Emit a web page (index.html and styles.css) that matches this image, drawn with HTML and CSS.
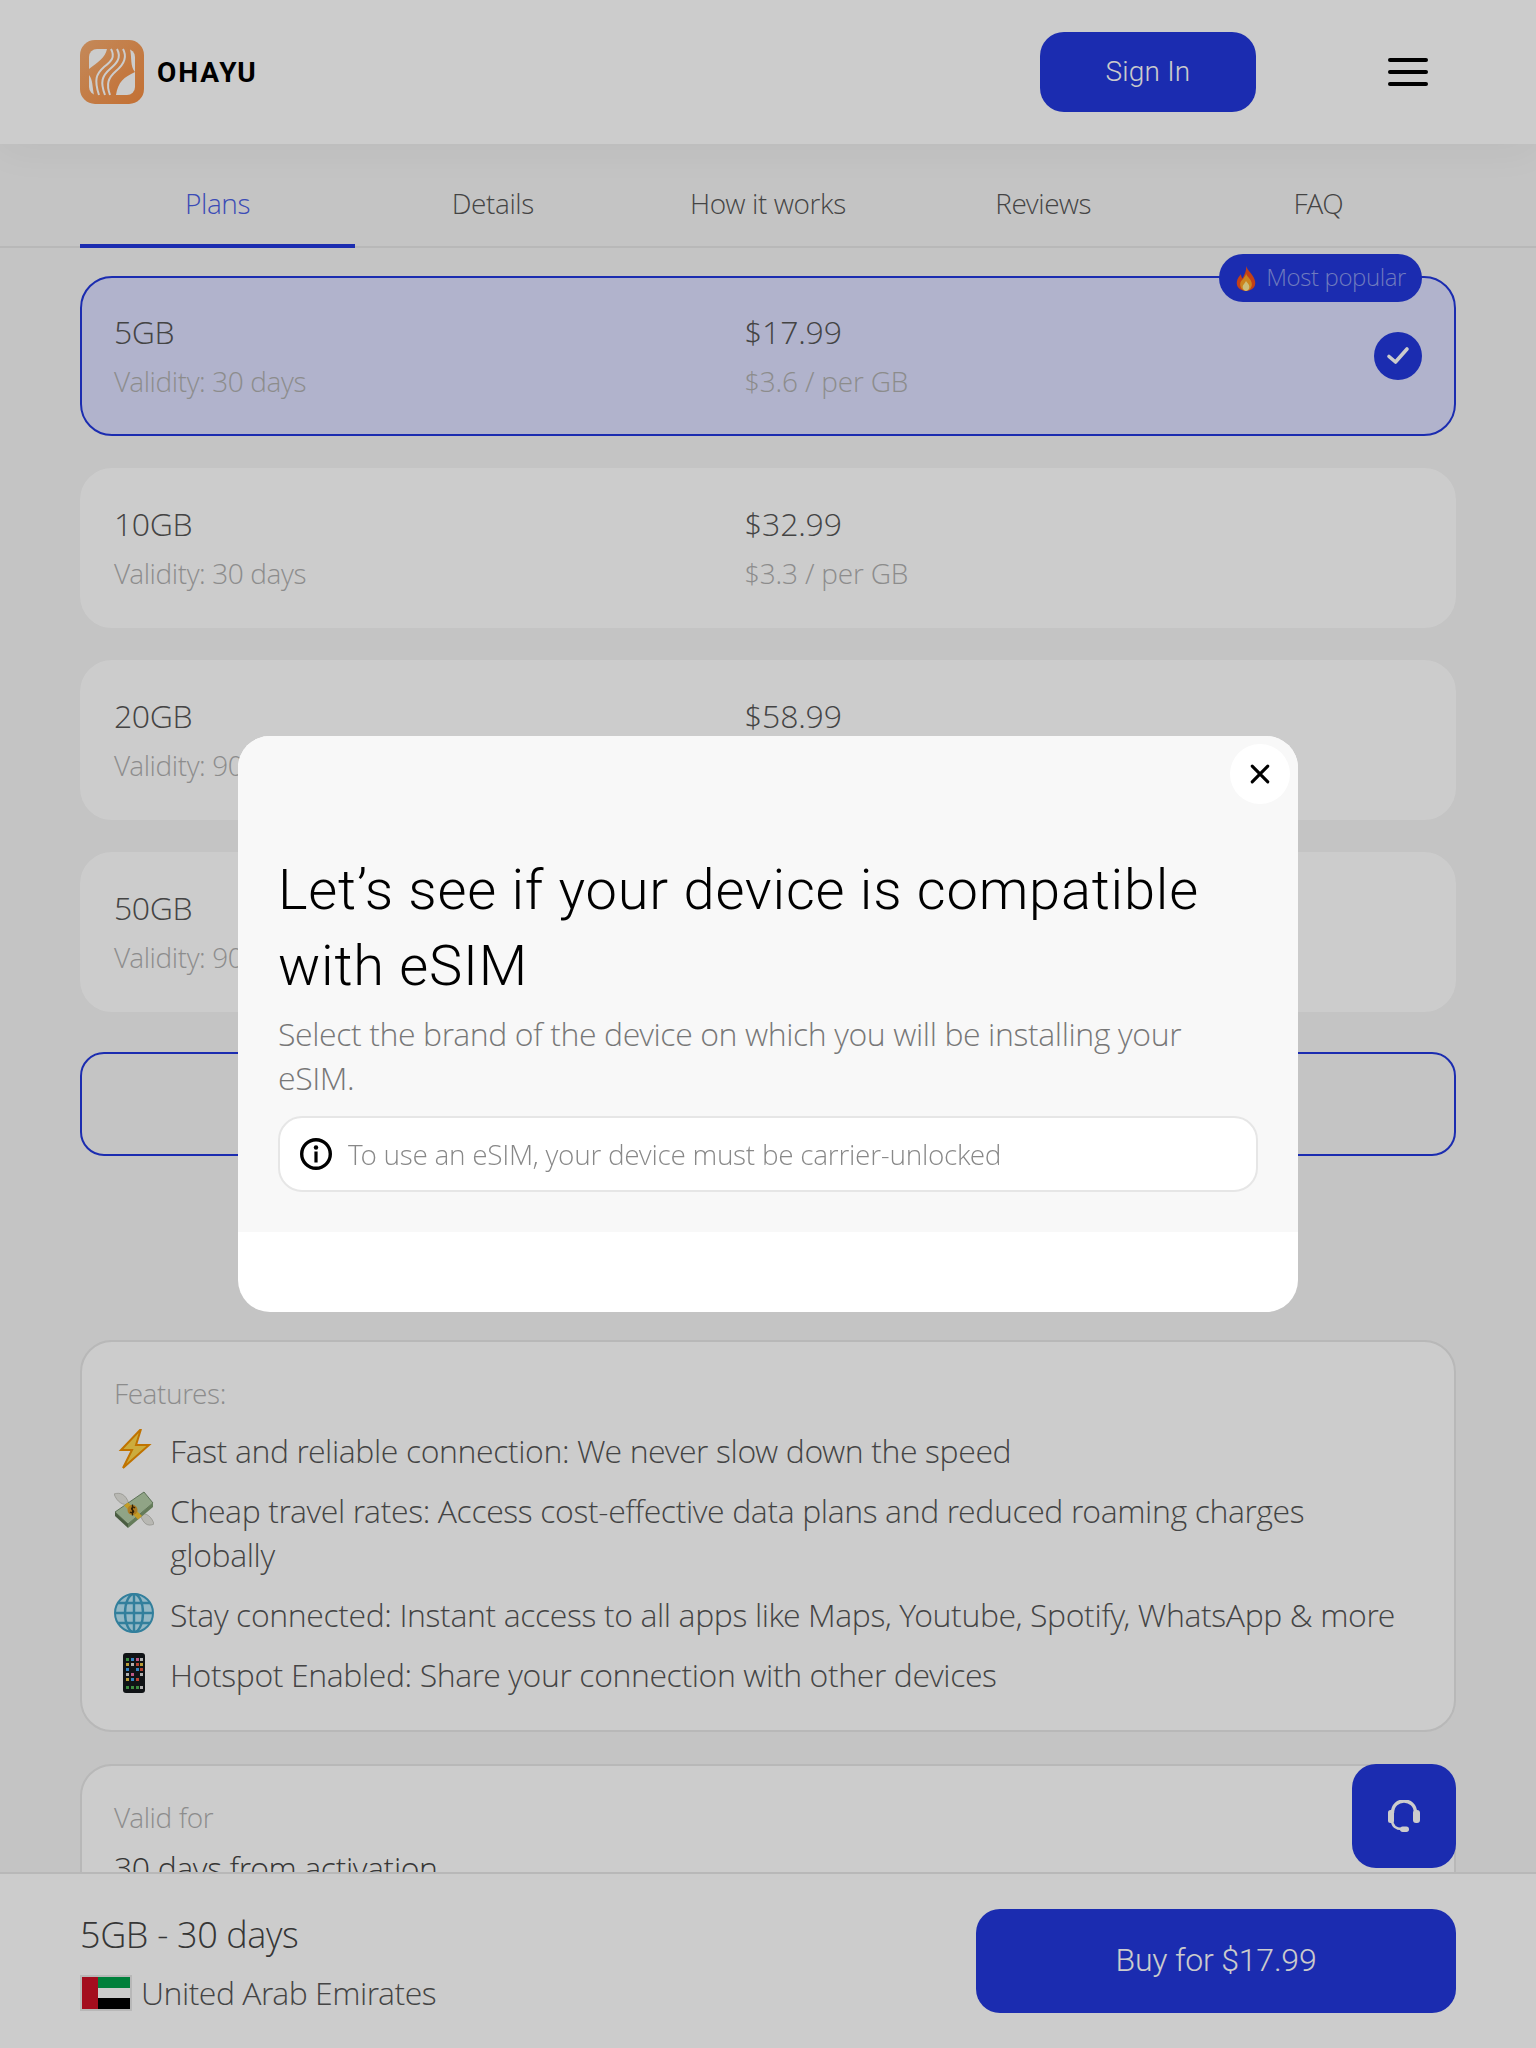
FILE: index.html
```html
<!DOCTYPE html>
<html lang="en">
  <head>
    <meta charset="UTF-8" />
    <meta name="viewport" content="width=device-width, initial-scale=1.0" />
    <title>OHAYU - United Arab Emirates eSIM</title>
    <link rel="stylesheet" href="styles.css">
  </head>
  <body>
    <header class="topbar">
      <div class="brand">
        <svg class="brand-logo" viewBox="0 0 64 64" aria-hidden="true">
          <defs>
            <linearGradient id="logoFill" x1="0" y1="0" x2="1" y2="1">
              <stop offset="0" stop-color="#f5ac70" />
              <stop offset="1" stop-color="#f48c40" />
            </linearGradient>
          </defs>
          <rect width="64" height="64" rx="15" fill="url(#logoFill)" />
          <rect x="9" y="9" width="46" height="46" rx="8" fill="#fff" />
          <path d="M9 29 C18 22 25 18 27 9 L50 9 C52 18 50 26 55 32 C44 37 38 42 36 55 L14 55 C12 46 13 40 9 35 Z" fill="url(#logoFill)" />
          <g fill="none" stroke="#fff" stroke-width="2">
            <path d="M31 9 C36 18 30 22 24 27 C16 34 14 40 19 55" />
            <path d="M37 9 C42 18 36 24 30 29 C22 36 20 42 25 55" />
            <path d="M43 9 C48 18 42 26 36 31 C28 38 26 44 30 55" />
          </g>
        </svg>
        <span class="brand-name">OHAYU</span>
      </div>
      <div class="topbar-actions">
        <button class="btn sign-in" type="button">Sign In</button>
        <div class="burger"><span></span><span></span><span></span></div>
      </div>
    </header>

    <nav class="tabs">
      <a class="tab tab-active">Plans</a>
      <a class="tab">Details</a>
      <a class="tab">How it works</a>
      <a class="tab">Reviews</a>
      <a class="tab">FAQ</a>
    </nav>

    <main class="content">
      <section class="plan plan-selected">
        <div class="plan-col">
          <div class="plan-title">5GB</div>
          <div class="plan-sub">Validity: 30 days</div>
        </div>
        <div class="plan-col plan-price">
          <div class="plan-title">$17.99</div>
          <div class="plan-sub">$3.6 / per GB</div>
        </div>
        <span class="badge">
          <svg class="badge-flame" viewBox="0 0 24 30" aria-hidden="true">
            <path d="M12 0 C14 6 22 11 23 19 C24 26 18 30 12 30 C6 30 0 26 1 19 C1.500 15 4 12 6 10 C6 13 7 14 8 15 C10 10 13 6 12 0 Z" fill="#f4511e" />
            <path d="M12 9 C13 13 19 16 19 22 C19 27 15 30 12 30 C9 30 5 27 5 22 C5 19 7 17 9 15 C10 13 12 12 12 9 Z" fill="#ffa726" />
            <path d="M12 18 C13 20 16 22 16 25 C16 28 14 30 12 30 C10 30 8 28 8 25 C8 22 11 21 12 18 Z" fill="#ffee99" />
          </svg>
          <span class="badge-text">Most popular</span>
        </span>
        <span class="plan-check">
          <svg viewBox="0 0 24 24" aria-hidden="true"><path d="M3 12.500 L9.500 18 L21 5" fill="none" stroke="#fff" stroke-width="3.600" stroke-linecap="round" stroke-linejoin="round" /></svg>
        </span>
      </section>

      <section class="plan">
        <div class="plan-col">
          <div class="plan-title">10GB</div>
          <div class="plan-sub">Validity: 30 days</div>
        </div>
        <div class="plan-col plan-price">
          <div class="plan-title">$32.99</div>
          <div class="plan-sub">$3.3 / per GB</div>
        </div>
      </section>

      <section class="plan">
        <div class="plan-col">
          <div class="plan-title">20GB</div>
          <div class="plan-sub">Validity: 90 days</div>
        </div>
        <div class="plan-col plan-price">
          <div class="plan-title">$58.99</div>
          <div class="plan-sub">$2.95 / per GB</div>
        </div>
      </section>

      <section class="plan">
        <div class="plan-col">
          <div class="plan-title">50GB</div>
          <div class="plan-sub">Validity: 90 days</div>
        </div>
      </section>

      <div class="outline-box"></div>

      <section class="panel panel-features">
        <div class="panel-label">Features:</div>
        <ul class="features">
          <li>
            <svg class="feature-icon" viewBox="0 0 40 40" aria-hidden="true">
              <path d="M27 0 L7 21 L18 21 L9 39 L35 16 L22 16 Z" fill="#ffd84d" stroke="#f09000" stroke-width="2" stroke-linejoin="miter" />
            </svg>
            <span>Fast and reliable connection: We never slow down the speed</span>
          </li>
          <li>
            <svg class="feature-icon feature-icon-low" viewBox="0 0 40 40" aria-hidden="true">
              <path d="M0 3 C6 1 12 3 15 13 C9 15 3 11 0 3 Z" fill="#e6e6e0" stroke="#a8a8a0" stroke-width="0.600" />
              <path d="M40 33 C34 36 29 33 26 23 C32 21 38 26 40 33 Z" fill="#e6e6e0" stroke="#a8a8a0" stroke-width="0.600" />
              <path d="M1 21 L30 1 L39 12 L14 33 Z" fill="#b4cda8" stroke="#5d7a55" stroke-width="0.800" />
              <path d="M1 21 L14 33 L14 37 L1 25 Z" fill="#5c7350" />
              <path d="M14 33 L39 12 L39 16 L14 37 Z" fill="#7d9a70" />
              <path d="M10 14.500 L14 11.500 L28 25 L24 28.500 Z" fill="#f4c430" />
              <circle cx="18.500" cy="19" r="5" fill="#d99a2b" />
              <path d="M21 17 C19 15 16 17.500 18.500 19 C21 20.500 19 23 16 21 M18.500 13.500 V24.500" fill="none" stroke="#3d2a08" stroke-width="1.300" />
            </svg>
            <span>Cheap travel rates: Access cost-effective data plans and reduced roaming charges globally</span>
          </li>
          <li>
            <svg class="feature-icon" viewBox="0 0 40 40" aria-hidden="true">
              <circle cx="20" cy="20" r="19" fill="#b8e6f7" stroke="#3f9fc4" stroke-width="2" />
              <g fill="none" stroke="#3f9fc4" stroke-width="2.400">
                <ellipse cx="20" cy="20" rx="9" ry="19" />
                <path d="M20 1 V39 M1 20 H39 M4 10 H36 M4 30 H36" />
              </g>
            </svg>
            <span>Stay connected: Instant access to all apps like Maps, Youtube, Spotify, WhatsApp &amp; more</span>
          </li>
          <li>
            <svg class="feature-icon" viewBox="0 0 40 40" aria-hidden="true">
              <rect x="9" y="0" width="22" height="40" rx="3" fill="#15181c" />
              <g fill="#4caf50"><rect x="12" y="5" width="3" height="3" /><rect x="12" y="33" width="3" height="3" /><rect x="17" y="33" width="3" height="3" /><rect x="22" y="33" width="3" height="3" /></g>
              <g fill="#42a5f5"><rect x="17" y="5" width="3" height="3" /><rect x="12" y="15" width="3" height="3" /><rect x="22" y="15" width="3" height="3" /><rect x="17" y="25" width="3" height="3" /></g>
              <g fill="#ec6ea8"><rect x="22" y="5" width="3" height="3" /><rect x="17" y="20" width="3" height="3" /></g>
              <g fill="#e8c547"><rect x="12" y="10" width="3" height="3" /><rect x="26" y="10" width="3" height="3" /><rect x="12" y="25" width="3" height="3" /></g>
              <g fill="#dddddd"><rect x="17" y="10" width="3" height="3" /><rect x="26" y="5" width="3" height="3" /><rect x="26" y="20" width="3" height="3" /><rect x="12" y="20" width="3" height="3" /><rect x="26" y="33" width="3" height="3" /></g>
              <g fill="#e5533d"><rect x="22" y="10" width="3" height="3" /><rect x="26" y="15" width="3" height="3" /><rect x="22" y="25" width="3" height="3" /></g>
            </svg>
            <span>Hotspot Enabled: Share your connection with other devices</span>
          </li>
        </ul>
      </section>

      <section class="panel panel-valid">
        <div class="panel-label">Valid for</div>
        <div class="panel-value">30 days from activation</div>
      </section>
    </main>

    <button class="support" type="button" aria-label="Support">
      <svg viewBox="0 0 32 32" aria-hidden="true">
        <path d="M4.500 13 C4.500 -3 27.500 -3 27.500 13" fill="none" stroke="#fff" stroke-width="3.400" />
        <rect x="0" y="10" width="6" height="13" rx="2.500" fill="#fff" />
        <rect x="25" y="10" width="7" height="13" rx="3" fill="#fff" />
        <path d="M4 20 C4 26 8 29 14 29" fill="none" stroke="#fff" stroke-width="2.600" />
        <rect x="12" y="26.500" width="9" height="5.500" rx="2.700" fill="#fff" />
      </svg>
    </button>

    <footer class="checkout">
      <div class="checkout-info">
        <div class="checkout-plan">5GB - 30 days</div>
        <div class="checkout-country">
          <span class="flag"><span class="flag-bar"></span><span class="flag-stripes"><i class="green"></i><i class="white"></i><i class="black"></i></span></span>
          United Arab Emirates
        </div>
      </div>
      <button class="btn buy" type="button">Buy for $17.99</button>
    </footer>

    <div class="overlay">
      <div class="modal">
        <button class="modal-close" type="button" aria-label="Close">
          <svg viewBox="0 0 20 20" aria-hidden="true"><path d="M3.500 3.500 L16.500 16.500 M16.500 3.500 L3.500 16.500" stroke="#000" stroke-width="2.600" stroke-linecap="round" /></svg>
        </button>
        <div class="modal-body">
          <h2 class="modal-title">Let’s see if your device is compatible with eSIM</h2>
          <p class="modal-text">Select the brand of the device on which you will be installing your eSIM.</p>
          <div class="notice">
            <svg class="notice-icon" viewBox="0 0 32 32" aria-hidden="true">
              <circle cx="16" cy="16" r="14.300" fill="none" stroke="#000" stroke-width="3.400" />
              <circle cx="16" cy="9.500" r="2.200" fill="#000" />
              <rect x="14.400" y="13.500" width="3.200" height="11" fill="#000" />
            </svg>
            <span>To use an eSIM, your device must be carrier-unlocked</span>
          </div>
        </div>
        <div class="modal-foot"></div>
      </div>
    </div>
  </body>
</html>
```

FILE: styles.css
```css
* {
  box-sizing: border-box;
  margin: 0;
  padding: 0;
}

html,
body {
  height: 2048px;
  overflow: hidden;
}

body {
  background-color: #f5f5f5;
  color: #444;
  font-family: "Open Sans Light", "Open Sans", sans-serif;
  font-weight: 300;
  font-size: 32px;
  letter-spacing: -0.4px;
  position: relative;
}

button {
  border: none;
  font-family: inherit;
}

.btn {
  background-color: #2238dc;
  color: #fff;
  font-family: Roboto, sans-serif;
  font-weight: 300;
  letter-spacing: 0;
  border-radius: 24px;
}

/* header */
.topbar {
  height: 144px;
  background-color: #fff;
  padding: 0 80px;
  display: flex;
  align-items: center;
  justify-content: space-between;
  position: relative;
  box-shadow: 0 4px 40px rgba(0, 0, 0, 0.05);
}

.brand {
  display: flex;
  align-items: center;
  gap: 13px;
}

.brand-logo {
  width: 64px;
  height: 64px;
}

.brand-name {
  font-family: Roboto, sans-serif;
  font-weight: 700;
  font-size: 28px;
  letter-spacing: 2px;
  color: #000;
}

.topbar-actions {
  display: flex;
  align-items: center;
  gap: 132px;
  padding-right: 28px;
}

.sign-in {
  width: 216px;
  height: 80px;
  padding-bottom: 2px;
  font-size: 28px;
  letter-spacing: 0.2px;
}

.burger {
  width: 40px;
  display: flex;
  flex-direction: column;
  gap: 8px;
}

.burger span {
  height: 4px;
  border-radius: 2px;
  background-color: #000;
}

/* tabs */
.tabs {
  height: 104px;
  padding: 0 80px;
  display: grid;
  grid-template-columns: repeat(5, 1fr);
  border-bottom: 2px solid #e6e6e6;
}

.tab {
  display: flex;
  align-items: center;
  justify-content: center;
  padding-top: 18px;
  height: 104px;
  font-size: 28px;
  color: #555;
  border-bottom: 4px solid transparent;
}

.tab-active {
  color: #4a5ee4;
  border-bottom-color: #2238dc;
}

/* plan cards */
.content {
  padding: 28px 80px 0;
  display: flex;
  flex-direction: column;
}

.plan {
  height: 160px;
  margin-bottom: 32px;
  padding: 0 32px;
  background-color: #fff;
  border: 2px solid #fff;
  border-radius: 32px;
  display: grid;
  grid-template-columns: 630px 1fr;
  align-items: center;
  position: relative;
}

.plan-selected {
  background-color: #dee0ff;
  border-color: #2238dc;
}

.plan-title {
  font-size: 32px;
  line-height: 44px;
  padding-top: 1px;
  color: #555;
}

.plan-sub {
  font-size: 28px;
  line-height: 44px;
  margin-top: 5px;
  color: #b0b0b0;
}

.plan-price {
  letter-spacing: -0.2px;
}

.badge {
  position: absolute;
  top: -24px;
  right: 32px;
  height: 48px;
  padding: 0 16px 0 17px;
  display: flex;
  align-items: center;
  gap: 10px;
  font-size: 24px;
  color: #8c9aee;
  background-color: #2238dc;
  border-radius: 24px;
}

.badge-text {
  padding-bottom: 3px;
}

.badge-flame {
  width: 20px;
  height: 25px;
}

.plan-check {
  position: absolute;
  top: 54px;
  right: 32px;
  width: 48px;
  height: 48px;
  border-radius: 50%;
  background-color: #2238dc;
  display: flex;
  align-items: center;
  justify-content: center;
}

.plan-check svg {
  width: 24px;
  height: 24px;
}

.outline-box {
  height: 104px;
  margin-top: 8px;
  border: 2px solid #2238dc;
  border-radius: 24px;
}

/* info panels */
.panel {
  background-color: #fff;
  border: 2px solid #e6e6e6;
  border-radius: 32px;
  padding: 32px;
}

.panel-features {
  height: 392px;
  margin-top: 184px;
  padding: 29px 48px 0 32px;
}

.panel-valid {
  margin-top: 32px;
  padding-top: 29px;
}

.panel-label {
  font-size: 28px;
  line-height: 44px;
  color: #b0b0b0;
}

.panel-value {
  font-size: 32px;
  line-height: 44px;
  margin-top: 7px;
}

.features {
  list-style: none;
  margin-top: 14px;
  display: flex;
  flex-direction: column;
  gap: 16px;
}

.features li {
  display: flex;
  gap: 16px;
  line-height: 44px;
  color: #555;
}

.feature-icon {
  flex: none;
  width: 40px;
  height: 40px;
}

.feature-icon-low {
  margin-top: 2px;
}

/* support button */
.support {
  position: fixed;
  top: 1764px;
  left: 1352px;
  width: 104px;
  height: 104px;
  border-radius: 24px;
  background-color: #2238dc;
  display: flex;
  align-items: center;
  justify-content: center;
}

.support svg {
  width: 32px;
  height: 32px;
}

/* bottom bar */
.checkout {
  position: fixed;
  left: 0;
  right: 0;
  top: 1872px;
  height: 176px;
  padding: 0 80px;
  background-color: #fff;
  border-top: 2px solid #e6e6e6;
  display: flex;
  align-items: center;
  justify-content: space-between;
}

.checkout-plan {
  font-size: 36px;
  line-height: 50px;
  padding-top: 3px;
  color: #444;
}

.checkout-country {
  margin-top: 11px;
  display: flex;
  align-items: center;
  gap: 9px;
  line-height: 44px;
  letter-spacing: -0.5px;
  color: #555;
}

.flag {
  display: flex;
  width: 52px;
  height: 36px;
  border: 2px solid #e6e6e6;
}

.flag-bar {
  width: 16px;
  background-color: #cd1126;
}

.flag-stripes {
  flex: 1;
  display: flex;
  flex-direction: column;
}

.flag-stripes i {
  flex: 1;
}

.flag-stripes .green {
  background-color: #00a04a;
}

.flag-stripes .white {
  background-color: #fff;
}

.flag-stripes .black {
  background-color: #000;
}

.buy {
  width: 480px;
  height: 104px;
  padding-bottom: 2px;
  font-size: 32px;
  letter-spacing: -0.2px;
}

/* modal */
.overlay {
  position: fixed;
  inset: 0;
  background-color: rgba(0, 0, 0, 0.2);
  display: flex;
  align-items: center;
  justify-content: center;
}

.modal {
  width: 1060px;
  height: 576px;
  background-color: #fff;
  border-radius: 32px;
  overflow: hidden;
  position: relative;
  display: flex;
  flex-direction: column;
}

.modal-close {
  position: absolute;
  top: 8px;
  right: 8px;
  width: 60px;
  height: 60px;
  border-radius: 50%;
  background-color: #fff;
  display: flex;
  align-items: center;
  justify-content: center;
}

.modal-close svg {
  width: 24px;
  height: 24px;
}

.modal-body {
  height: 496px;
  padding: 116px 40px 0;
  background-color: #f8f8f8;
}

.modal-title {
  font-family: Roboto, sans-serif;
  font-weight: 300;
  font-size: 56px;
  line-height: 76px;
  letter-spacing: 0.8px;
  color: #000;
}

.modal-text {
  margin-top: 8px;
  font-size: 32px;
  line-height: 44px;
  color: #777;
}

.notice {
  margin-top: 16px;
  height: 76px;
  padding: 0 20px;
  background-color: #fff;
  border: 2px solid #e6e6e6;
  border-radius: 24px;
  display: flex;
  align-items: center;
  gap: 16px;
  font-size: 28px;
  letter-spacing: -0.3px;
  color: #888;
}

.notice-icon {
  flex: none;
  width: 32px;
  height: 32px;
}

.modal-foot {
  flex: 1;
}
```
